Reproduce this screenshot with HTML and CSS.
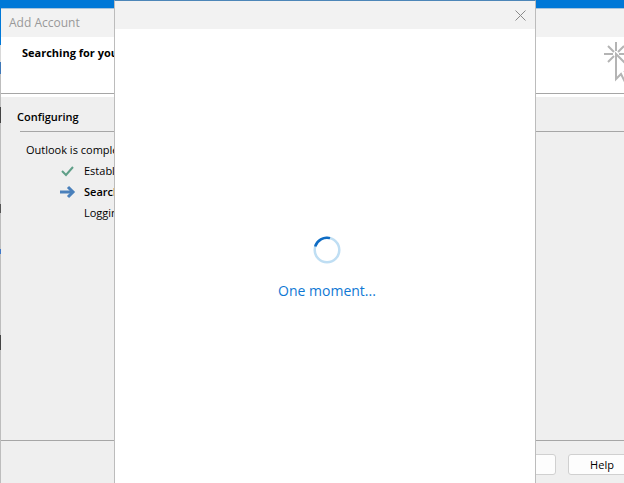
FILE: index.html
```
<!DOCTYPE html>
<html lang="en">
<head>
    <meta charset="UTF-8">
    <meta name="viewport" content="width=device-width, initial-scale=1.0">
    <title>Add Account</title>
    <link rel="stylesheet" href="styles.css">
</head>
<body>
    <main class="wizard">
        <header class="title-bar">Add Account</header>

        <section class="banner">
            <h1>Searching for your mail server settings...</h1>
            <svg class="banner-icon" width="36" height="44" viewBox="0 0 36 44" fill="none" stroke="#b4b4b4" stroke-width="2">
                <path d="M12 0v9M0 12h9M15 12h9M4 4l6 6M20 4l-6 6M4 20l6-6"/>
                <path d="M12 12v25l5-5 4 8 4-2-4-8h9z"/>
            </svg>
        </section>

        <section class="content">
            <h2>Configuring</h2>
            <div class="progress">
                <p>Outlook is completing the setup for your account. This might take several minutes.</p>
                <ul class="steps">
                    <li>
                        <svg width="16" height="14" viewBox="0 0 16 14" fill="none" stroke="#5f9f88" stroke-width="2">
                            <path d="M2 7l4 4 7-8"/>
                        </svg>
                        <span>Establishing network connection</span>
                    </li>
                    <li class="current">
                        <svg width="16" height="14" viewBox="0 0 16 14" fill="none" stroke="#4a80bb" stroke-width="3">
                            <path d="M0 7h13"/>
                            <path d="M8 2l5 5-5 5"/>
                        </svg>
                        <span>Searching for your settings</span>
                    </li>
                    <li>
                        <span class="no-icon"></span>
                        <span>Logging on to the mail server</span>
                    </li>
                </ul>
            </div>
        </section>

        <footer class="actions">
            <button type="button">Next</button>
            <button type="button">Help</button>
        </footer>
    </main>

    <!-- Sign in dialog -->
    <div class="dialog" role="dialog" aria-label="Sign in">
        <div class="dialog-bar">
            <button type="button" class="close" aria-label="Close">
                <svg width="11" height="11" viewBox="0 0 11 11" fill="none" stroke="#8a8a8a">
                    <path d="M.5.5l10 10M10.500.5l-10 10"/>
                </svg>
            </button>
        </div>
        <div class="dialog-body">
            <svg width="28" height="28" viewBox="0 0 28 28" fill="none" stroke-width="2.5">
                <circle cx="14" cy="14" r="12.300" stroke="#bfdef3"/>
                <path d="M2.200 10.500A12.300 12.300 0 0 1 17 2.100" stroke="#0f6cc4"/>
            </svg>
            <p>One moment...</p>
        </div>
    </div>
</body>
</html>
```
FILE: styles.css
```
* {
    margin: 0;
    padding: 0;
    box-sizing: border-box;
}

body {
    height: 100vh;
    padding: 8px 0 0 1px;
    overflow: hidden;
    font-family: "Open Sans", "Noto Sans", sans-serif;
    font-size: 11px;
    line-height: 21px;
    color: #000;
    /* desktop behind the windows */
    background:
        linear-gradient(#0078d7, #0078d7) 0 0 / 100% 8px no-repeat,
        linear-gradient(#0078d7 45px, #d8d8d8 45px 62px, #3f78b8 62px 74px,
            #bdbdbd 74px 107px, #444 107px 123px, #bdbdbd 123px 204px,
            #555 204px 213px, #bdbdbd 213px 249px, #3f78c8 249px 254px,
            #bdbdbd 254px 335px, #444 335px 350px, #bdbdbd 350px);
}

/* Account wizard, runs past the right edge of the screen */
.wizard {
    display: flex;
    flex-direction: column;
    width: calc(100% + 24px);
    height: 100%;
    border-top: 1px solid #a9c4dc;
    background: #efefef;
}

.title-bar {
    height: 28px;
    padding-left: 8px;
    font-size: 12px;
    line-height: 28px;
    color: #999;
    background: #f2f2f2;
}

.banner {
    display: flex;
    justify-content: space-between;
    height: 57px;
    padding: 5px 8px 0 21px;
    border-bottom: 1px solid #a6a6a6;
    background: #fff;
}

h1,
h2 {
    font-size: 11px;
    font-weight: 700;
    line-height: 21px;
}

h2 {
    font-weight: 600;
}

.content {
    flex: 1;
    padding: 9px 0 0 16px;
    border-top: 3px solid #fff;
}

.progress {
    margin: 4px 0 0 3px;
    padding: 8px 0 0 6px;
    border-top: 1px solid #a6a6a6;
}

.progress p {
    line-height: 20px;
}

.steps {
    list-style: none;
    padding-left: 34px;
}

.steps li {
    display: flex;
    align-items: center;
    gap: 8px;
}

.steps .current {
    font-weight: 600;
}

.no-icon {
    width: 16px;
}

.actions {
    display: flex;
    justify-content: flex-end;
    gap: 12px;
    padding: 13px 12px 8px 0;
    border-top: 1px solid #a6a6a6;
}

.actions button {
    width: 68px;
    height: 21px;
    border: 1px solid #d0d0d0;
    border-radius: 3px;
    font: inherit;
    line-height: 19px;
    background: #fdfdfd;
}

/* Dialog over the wizard */
.dialog {
    position: absolute;
    top: 0;
    bottom: 0;
    left: 114px;
    right: 88px;
    display: flex;
    flex-direction: column;
    border: 1px solid #bcbcbc;
    border-top-color: #4d86b8;
    border-bottom: none;
    background: #fff;
}

.dialog-bar {
    display: flex;
    justify-content: flex-end;
    align-items: center;
    height: 28px;
    padding-right: 9px;
    background: #f2f2f2;
}

.close {
    display: flex;
    border: none;
    background: none;
}

.dialog-body {
    flex: 1;
    display: flex;
    flex-direction: column;
    justify-content: center;
    align-items: center;
    gap: 16px;
    padding: 25px 0 0 4px;
    font-size: 14px;
    color: #0f78d4;
}
```
